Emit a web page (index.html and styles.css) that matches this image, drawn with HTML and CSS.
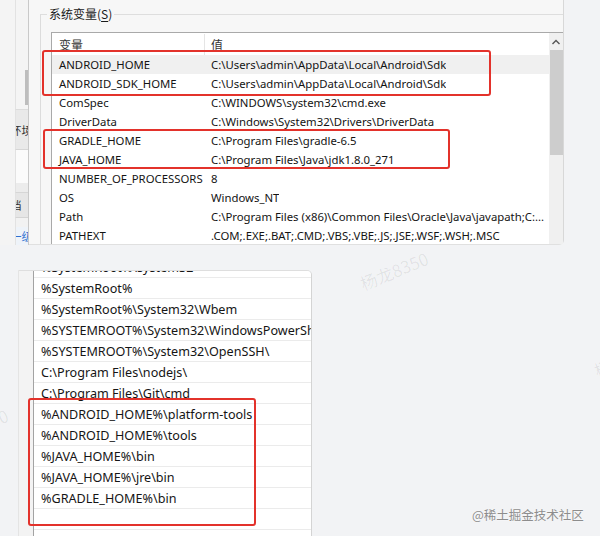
FILE: index.html
```html
<!DOCTYPE html>
<html lang="zh">
<head>
<meta charset="utf-8">
<link rel="stylesheet" href="styles.css">
</head>
<body>
<div class="page">
  <div class="top">
    <div class="side">
      <div class="band b1"></div>
      <div class="band b2"><span class="thumb"></span></div>
      <div class="band b3"><span class="stxt">环境</span></div>
      <div class="band b4"></div>
      <div class="band b5"></div>
      <div class="band b6"><span class="stxt">档</span></div>
      <div class="band b7"></div>
      <div class="band b8"><span class="stxt blue">一级</span></div>
    </div>
    <div class="win">
      <div class="group">
        <div class="legend">系统变量(<u>S</u>)</div>
        <div class="list">
          <div class="rows">
            <div class="row head"><span class="c1">变量</span><span class="c2">值</span></div>
            <div class="row sel"><span class="c1">ANDROID_HOME</span><span class="c2">C:\Users\admin\AppData\Local\Android\Sdk</span></div>
            <div class="row"><span class="c1">ANDROID_SDK_HOME</span><span class="c2">C:\Users\admin\AppData\Local\Android\Sdk</span></div>
            <div class="row"><span class="c1">ComSpec</span><span class="c2">C:\WINDOWS\system32\cmd.exe</span></div>
            <div class="row"><span class="c1">DriverData</span><span class="c2">C:\Windows\System32\Drivers\DriverData</span></div>
            <div class="row"><span class="c1">GRADLE_HOME</span><span class="c2">C:\Program Files\gradle-6.5</span></div>
            <div class="row"><span class="c1">JAVA_HOME</span><span class="c2">C:\Program Files\Java\jdk1.8.0_271</span></div>
            <div class="row"><span class="c1">NUMBER_OF_PROCESSORS</span><span class="c2">8</span></div>
            <div class="row"><span class="c1">OS</span><span class="c2">Windows_NT</span></div>
            <div class="row"><span class="c1">Path</span><span class="c2">C:\Program Files (x86)\Common Files\Oracle\Java\javapath;C:...</span></div>
            <div class="row"><span class="c1">PATHEXT</span><span class="c2">.COM;.EXE;.BAT;.CMD;.VBS;.VBE;.JS;.JSE;.WSF;.WSH;.MSC</span></div>
          </div>
          <div class="scroll">
            <div class="arrow">
              <svg width="10" height="8" viewBox="0 0 10 8"><path d="M1.5 6 L5 2.5 L8.5 6" fill="none" stroke="#555" stroke-width="1.4"/></svg>
            </div>
            <div class="sthumb"></div>
          </div>
        </div>
      </div>
    </div>
  </div>
  <div class="bottom">
    <div class="panel">
      <div class="plist">
        <div class="prow cut">%SystemRoot%\system32</div>
        <div class="prow">%SystemRoot%</div>
        <div class="prow">%SystemRoot%\System32\Wbem</div>
        <div class="prow">%SYSTEMROOT%\System32\WindowsPowerShell\v1.0\</div>
        <div class="prow">%SYSTEMROOT%\System32\OpenSSH\</div>
        <div class="prow">C:\Program Files\nodejs\</div>
        <div class="prow">C:\Program Files\Git\cmd</div>
        <div class="prow">%ANDROID_HOME%\platform-tools</div>
        <div class="prow">%ANDROID_HOME%\tools</div>
        <div class="prow">%JAVA_HOME%\bin</div>
        <div class="prow">%JAVA_HOME%\jre\bin</div>
        <div class="prow">%GRADLE_HOME%\bin</div>
        <div class="prow"></div>
        <div class="prow"></div>
      </div>
    </div>
  </div>

  <div class="mark m1">杨龙8350</div>
  <div class="mark m2">杨龙8350</div>
  <div class="mark m3">杨龙8350</div>
  <div class="brand">@稀土掘金技术社区</div>

  <div class="redbox r1"></div>
  <div class="redbox r2"></div>
  <div class="redbox r3"></div>
</div>
</body>
</html>
```
FILE: styles.css
```css
* { box-sizing: border-box; }
html, body { margin: 0; padding: 0; }
body {
  background: #f2f3f5;
  font-family: "Noto Sans", "Noto Sans CJK SC", sans-serif;
  color: #111;
}
.page {
  position: relative;
  width: 600px;
  height: 536px;
  overflow: hidden;
}

/* ---------- top window ---------- */
.top {
  display: flex;
  height: 245px;
}
.side {
  width: 29px;
  flex: none;
  display: flex;
  flex-direction: column;
  background: #f4f4f4;
  border-right: 1px solid #c9c9c9;
  overflow: hidden;
}
.band {
  position: relative;
  border-left: 1px solid #e2e2e2;
  margin-left: 15px;
  display: flex;
  align-items: center;
  overflow: hidden;
}
.b1 { height: 70px; }
.b2 { height: 40px; border-bottom: 1px solid #dcdcdc; }
.b2 .thumb { position: absolute; right: 0; top: 0; width: 3px; height: 35px; background: #bdbdbd; }
.b3 { height: 40px; background: #e9e9e9; border-bottom: 1px solid #d6d6d6; }
.b4 { height: 33px; background: #fbfbfb; }
.b5 { height: 10px; background: #ececec; border-bottom: 1px solid #d6d6d6; }
.b6 { height: 25px; background: #e6e6e6; border-bottom: 1px solid #d4d4d4; }
.b7 { height: 9px; background: #f2f2f2; }
.b8 { height: 18px; background: #eef3f9; }
.stxt {
  flex: none;
  margin-left: -6px;
  font-size: 11.5px;
  color: #333;
  white-space: nowrap;
  font-family: "Noto Sans CJK SC", sans-serif;
}
.stxt.blue { color: #2f6fd0; }

.win {
  width: 535px;
  flex: none;
  background: #f7f7f7;
  border-right: 1px solid #d8d8d8;
  border-bottom: 1px solid #e0e0e0;
  border-bottom-right-radius: 5px;
  padding: 14px 0 0 11px;
}
.group {
  position: relative;
  height: 100%;
  border-top: 1px solid #dedede;
  border-left: 1px solid #dcdcdc;
  padding: 17px 0 0 10px;
}
.legend {
  position: absolute;
  left: 6px;
  top: -9px;
  padding: 0 2px;
  background: #f7f7f7;
  font-family: "Noto Sans CJK SC", sans-serif;
  font-size: 12px;
  line-height: 16px;
  color: #1a1a1a;
}
.legend u { text-underline-offset: 2px; }
.list {
  display: flex;
  height: 212px;
  background: #fff;
  border-top: 1px solid #a9a9a9;
  border-left: 1px solid #a9a9a9;
  overflow: hidden;
}
.rows { flex: 1; min-width: 0; }
.row {
  display: flex;
  height: 19px;
  align-items: center;
  font-size: 11.35px;
  white-space: nowrap;
  color: #141414;
}
.row.head { height: 22px; color: #333; font-family: "Noto Sans CJK SC", sans-serif; font-size: 12px; }
.row.sel { background: #f0f0f0; }
.c1 { width: 153px; padding-left: 7px; flex: none; }
.head .c1 { border-right: 1px solid #e5e5e5; height: 21px; line-height: 21px; }
.c2 { padding-left: 6px; overflow: hidden; }
.scroll {
  width: 14px;
  flex: none;
  background: #f0f0f0;
  display: flex;
  flex-direction: column;
  align-items: center;
}
.arrow { height: 17px; display: flex; align-items: center; justify-content: center; }
.sthumb { width: 13px; height: 105px; background: #cdcdcd; }

/* ---------- bottom list ---------- */
.bottom {
  display: flex;
  margin-top: 25px;
  padding-left: 18px;
}
.panel {
  width: 294px;
  height: 270px;
  background: #f3f3f3;
  border-top: 1px solid #dedede;
  border-left: 1px solid #e4e4e4;
  border-right: 1px solid #d4d4d4;
  border-top-right-radius: 5px;
  padding-left: 14px;
  overflow: hidden;
}
.plist {
  height: 100%;
  background: #fff;
  border-left: 1px solid #a3a3a3;
  overflow: hidden;
}
.prow {
  height: 21px;
  border-bottom: 1px solid #ebebeb;
  padding-left: 7px;
  font-size: 12.6px;
  line-height: 22px;
  white-space: nowrap;
  overflow: hidden;
  color: #151515;
}
.prow.cut { margin-top: -14px; }

/* ---------- overlays ---------- */
.mark {
  position: absolute;
  font-family: "Noto Sans CJK SC", sans-serif;
  font-size: 17px;
  color: rgba(0, 0, 0, 0.07);
  transform: rotate(-22deg);
  white-space: nowrap;
}
.m1 { left: 358px; top: 258px; }
.m2 { left: 592px; top: 345px; }
.m3 { left: -62px; top: 415px; }
.brand {
  position: absolute;
  left: 472px;
  top: 505px;
  font-family: "Noto Sans CJK SC", sans-serif;
  font-size: 12.5px;
  color: #8d8d8d;
  text-shadow: 0 0 2px #fff;
  white-space: nowrap;
}
.redbox {
  position: absolute;
  border: 2px solid #e3322b;
  border-radius: 3px;
}
.r1 { left: 42px; top: 50px; width: 449px; height: 46px; }
.r2 { left: 43px; top: 129px; width: 407px; height: 40px; }
.r3 { left: 28px; top: 398px; width: 228px; height: 128px; }
```
